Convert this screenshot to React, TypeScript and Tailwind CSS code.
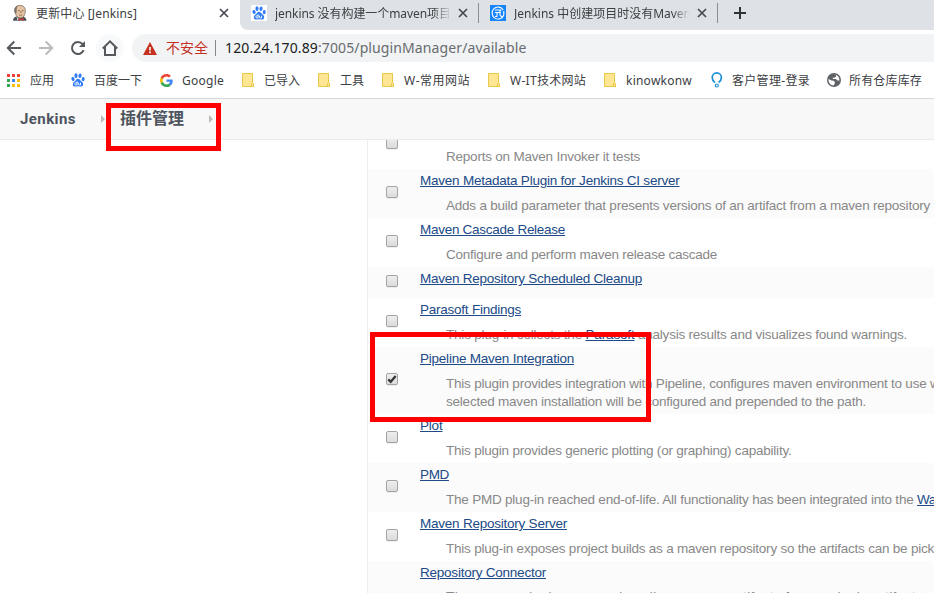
import { useLayoutEffect, useRef, useState } from 'react';
import type { ReactNode } from 'react';

/* Text set to an exact width by spreading the difference over its letters. */
function Fit({ w, children, className = '' }: { w: number; children: string; className?: string }) {
  const ref = useRef<HTMLSpanElement>(null);
  const [ls, setLs] = useState(0);
  useLayoutEffect(() => {
    if (ref.current) setLs((w - ref.current.getBoundingClientRect().width) / children.length);
  }, [w, children]);
  return (
    <span ref={ref} className={`whitespace-pre ${className}`} style={{ letterSpacing: ls }}>
      {children}
    </span>
  );
}

function Paw({ className }: { className: string }) {
  return (
    <svg viewBox="0 0 16 16" className={className} fill="#2f7cf6">
      <ellipse cx="5.7" cy="3" rx="1.8" ry="2.6" />
      <ellipse cx="10.3" cy="3.1" rx="1.8" ry="2.6" transform="rotate(10 10.3 3.1)" />
      <ellipse cx="2.3" cy="6.8" rx="1.8" ry="2.3" transform="rotate(-15 2.3 6.8)" />
      <ellipse cx="13.9" cy="7" rx="1.7" ry="2.4" transform="rotate(10 13.9 7)" />
      <path d="M8 6.5c2 0 2.4 1.8 3.9 3 1.8 1.4 2.4 2.8 1.8 4.4-.7 2-2.7 1.6-4.2 1.4-1-.2-2-.2-3 0-1.500.3-3.600.5-4.200-1.400-.600-1.700.3-3 1.800-4.200C5.600 8.500 6 6.500 8 6.500z" />
      <path d="M7 9.400v4.200H5.500c-1.600 0-1.600-2.400 0-2.400H7M8.600 11v2c0 .6.400.7 1 .7h1.300V11" fill="none" stroke="#fff" strokeWidth="1" />
    </svg>
  );
}

function Butler() {
  return (
    <svg viewBox="0 0 16 16" className="h-4 w-4">
      <path d="M1 15.800c0-3 2-4 4-4.500l6 .2c2 .6 3.500 1.800 3.500 4.300z" fill="#4a5358" />
      <path d="M2.800 6C2.300 2.300 5 .3 8 .3s5.600 2 5.300 5.700c-.2 3.500-1.500 7-4.900 7S3.200 9.500 2.800 6z" fill="#e3c3a2" stroke="#6b625a" strokeWidth=".7" />
      <path d="M3 8C1.500 3.500 3.500 1 6 .5 4.600 2 4.800 4 4.500 8.500z" fill="#77706a" />
      <path d="M6 5.600h1.800M9.800 5.600h1.800M7 9.800c1 .6 2.400.6 3.300 0M8.900 6v2" stroke="#7c5c4c" strokeWidth=".8" fill="none" />
      <path d="M6.500 13l2.300 1 2.700-1v2.800l-2.700-1-2.300 1z" fill="#d33833" />
      <path d="M4.500 11.500l2 2.300-.8 2z" fill="#eee" />
    </svg>
  );
}

function Close() {
  return (
    <svg viewBox="0 0 10 10" className="h-[10px] w-[10px] shrink-0" stroke="#45494d" strokeWidth="1.700">
      <path d="M1 1l8 8M9 1L1 9" />
    </svg>
  );
}

function FolderIcon() {
  return (
    <svg viewBox="0 0 12 14" className="h-[14px] w-3">
      <path d="M.5.5h10v9.500l1 .5v3H.5z" fill="#ffe694" stroke="#e9c747" />
      <path d="M9.500 13.500v-3l1-1 1 1v3z" fill="#ffe694" stroke="#e9c747" />
    </svg>
  );
}

function AppsIcon() {
  const colors = ['#ea4335', '#ea4335', '#ea4335', '#34a853', '#4285f4', '#fbbc05', '#34a853', '#fbbc05', '#fbbc05'];
  return (
    <svg viewBox="0 0 13 13" className="h-[13px] w-[13px]" shapeRendering="crispEdges">
      {colors.map((c, i) => (
        <rect key={i} x={(i % 3) * 5} y={Math.floor(i / 3) * 5} width="3" height="3" fill={c} />
      ))}
    </svg>
  );
}

function GoogleIcon() {
  return (
    <svg viewBox="0 0 48 48" className="h-[13px] w-[13px]">
      <path fill="#EA4335" d="M24 9.500c3.540 0 6.710 1.220 9.210 3.600l6.850-6.850C35.900 2.380 30.470 0 24 0 14.620 0 6.510 5.380 2.560 13.220l7.980 6.190C12.430 13.720 17.740 9.500 24 9.500z" />
      <path fill="#4285F4" d="M46.980 24.550c0-1.570-.15-3.090-.38-4.550H24v9.020h12.940c-.58 2.960-2.260 5.480-4.780 7.180l7.730 6c4.510-4.180 7.090-10.360 7.090-17.650z" />
      <path fill="#FBBC05" d="M10.530 28.590c-.48-1.450-.76-2.990-.76-4.590s.27-3.140.76-4.590l-7.980-6.190C.92 16.460 0 20.120 0 24c0 3.880.92 7.540 2.560 10.780l7.970-6.190z" />
      <path fill="#34A853" d="M24 48c6.480 0 11.930-2.130 15.890-5.810l-7.730-6c-2.150 1.450-4.920 2.300-8.160 2.300-6.260 0-11.570-4.220-13.470-9.910l-7.980 6.190C6.510 42.620 14.620 48 24 48z" />
    </svg>
  );
}

function BulbIcon() {
  return (
    <svg viewBox="0 0 12 16" className="h-4 w-3" fill="none" stroke="#1c8fd6">
      <path d="M4 10.500C2.200 9.200 1.200 7.600 1.200 5.500a4.600 4.600 0 0 1 9.200 0c0 2.100-1 3.700-2.800 5" strokeWidth="1.700" />
      <circle cx="5.800" cy="13.500" r="1.500" strokeWidth="1.200" />
    </svg>
  );
}

function GlobeIcon() {
  return (
    <svg viewBox="0 0 14 14" className="h-[14px] w-[14px]">
      <circle cx="7" cy="7" r="7" fill="#5f6368" />
      <path d="M1.500 6l3 1.500 2 .3L7.800 9v1.500L6.500 12.500C3.800 12.300 1.500 10 1.500 7zM6.500 1.500L9 1.800v1.700L7.500 4.800H5.800V6h3l1.700 1.500h1.900C12.700 4 10 1.300 6.500 1.500z" fill="#fff" />
    </svg>
  );
}

const bookmarks: { icon: ReactNode; label: string; box: string; w: number; gap: string }[] = [
  { icon: <AppsIcon />, label: '应用', box: 'w-[64px]', w: 24, gap: 'w-[23px]' },
  { icon: <Paw className="h-[14px] w-[14px]" />, label: '百度一下', box: 'w-[89px]', w: 48, gap: 'w-[23px]' },
  { icon: <GoogleIcon />, label: 'Google', box: 'w-[82px]', w: 42, gap: 'w-[22px]' },
  { icon: <FolderIcon />, label: '已导入', box: 'w-[76px]', w: 36, gap: 'w-[22px]' },
  { icon: <FolderIcon />, label: '工具', box: 'w-[64px]', w: 24, gap: 'w-[22px]' },
  { icon: <FolderIcon />, label: 'W-常用网站', box: 'w-[106px]', w: 66, gap: 'w-[22px]' },
  { icon: <FolderIcon />, label: 'W-IT技术网站', box: 'w-[116px]', w: 76, gap: 'w-[22px]' },
  { icon: <FolderIcon />, label: 'kinowkonw', box: 'w-[107px]', w: 66, gap: 'w-[22px]' },
  { icon: <BulbIcon />, label: '客户管理-登录', box: 'w-[116px]', w: 78, gap: 'w-[21px]' },
  { icon: <GlobeIcon />, label: '所有仓库库存', box: 'w-[107px]', w: 73, gap: 'w-[22px]' },
];

function Check({ checked = false }: { checked?: boolean }) {
  return (
    <span className="flex h-3 w-3 items-center justify-center rounded-[2px] border border-[#a3a3a3] bg-linear-to-b from-[#eeeeee] to-[#dcdcdc] shadow-[0_1px_0_rgba(0,0,0,0.06)]">
      {checked && (
        <svg viewBox="0 0 10 10" className="h-[10px] w-[10px] shrink-0" fill="none" stroke="#333" strokeWidth="2.200">
          <path d="M1.300 5.400l2.400 2.400L8.700 2" />
        </svg>
      )}
    </span>
  );
}

type Part = { text: string; w: number; link?: boolean };
type Plugin = { name: string; w: number; h: string; pad: string; lines: Part[][]; checked?: boolean; noBox?: boolean };

const plugins: Plugin[] = [
  { name: 'Maven Metadata Plugin for Jenkins CI server', w: 259.500, h: 'h-[49px]', pad: 'pt-[17px]', lines: [[{ text: 'Adds a build parameter that presents versions of an artifact from a maven repository', w: 484 }]] },
  { name: 'Maven Cascade Release', w: 145, h: 'h-[49px]', pad: 'pt-[17px]', lines: [[{ text: 'Configure and perform maven release cascade', w: 271 }]] },
  { name: 'Maven Repository Scheduled Cleanup', w: 222, h: 'h-[31px]', pad: 'pt-[8px]', lines: [] },
  { name: 'Parasoft Findings', w: 101, h: 'h-[49px]', pad: 'pt-[17px]', lines: [[{ text: 'This plug-in collects the ', w: 139.500 }, { text: 'Parasoft', w: 49, link: true }, { text: ' analysis results and visualizes found warnings.', w: 272.500 }]] },
  {
    name: 'Pipeline Maven Integration', w: 154, h: 'h-[67px]', pad: 'pt-[26px]', checked: true,
    lines: [
      [{ text: 'This plugin provides integration with Pipeline, configures maven environment to use ', w: 484 }, { text: 'w', w: 9 }],
      [{ text: 'selected maven installation will be configured and prepended to the path.', w: 420 }],
    ],
  },
  { name: 'Plot', w: 22.500, h: 'h-[49px]', pad: 'pt-[17px]', lines: [[{ text: 'This plugin provides generic plotting (or graphing) capability.', w: 345.500 }]] },
  { name: 'PMD', w: 29, h: 'h-[49px]', pad: 'pt-[17px]', lines: [[{ text: 'The PMD plug-in reached end-of-life. All functionality has been integrated into the ', w: 471 }, { text: 'Wa', w: 19, link: true }]] },
  { name: 'Maven Repository Server', w: 147, h: 'h-[49px]', pad: 'pt-[17px]', lines: [[{ text: 'This plug-in exposes project builds as a maven repository so the artifacts can be pick', w: 488 }]] },
  { name: 'Repository Connector', w: 126, h: 'h-[49px]', pad: 'pt-[17px]', noBox: true, lines: [[{ text: 'The maven plugin can resolve all necessary artifacts from a single artifact', w: 470 }]] },
];

function Row({ p, shaded, last }: { p: Plugin; shaded: boolean; last: boolean }) {
  return (
    <div className={`flex ${p.h} shrink-0 ${shaded ? 'bg-[#fbfbfb]' : 'bg-white'}`}>
      <div className={`w-[52px] shrink-0 pl-[18px] ${p.pad}`}>{!p.noBox && <Check checked={p.checked} />}</div>
      <div className="pt-[3px]">
        <div className="h-[18px] leading-[18px] text-[#204a87]">
          <Fit w={p.w} className="underline">{p.name}</Fit>
        </div>
        <div className={`pl-[26px] ${last ? 'pt-[6px]' : 'pt-[7px]'}`}>
          {p.lines.map((line, i) => (
            <div key={i} className="flex h-[18px] leading-[18px] text-[#888888]">
              {line.map((part) => (
                <Fit key={part.text} w={part.w} className={part.link ? 'text-[#204a87] underline' : ''}>{part.text}</Fit>
              ))}
            </div>
          ))}
        </div>
      </div>
    </div>
  );
}

function Arrow() {
  return <span className="h-0 w-0 border-y-4 border-l-4 border-y-transparent border-l-[#babdb6]" />;
}

export default function App() {
  return (
    <div className="relative flex h-[593px] w-[934px] flex-col overflow-hidden bg-white font-['Noto_Sans','Noto_Sans_CJK_SC',sans-serif] text-xs text-[#3c4043]">
      {/* tab strip */}
      <div className="flex h-[30px] shrink-0 bg-white">
        <div className="flex w-60 items-center bg-white pb-1 pl-3">
          <Butler />
          <div className="ml-2 w-[183px] pt-[2px]"><Fit w={101}>更新中心 [Jenkins]</Fit></div>
          <Close />
        </div>
        <div className="flex flex-1 items-center rounded-bl-lg bg-[#dee1e6] pb-1 pl-[11px]">
          <div className="flex h-4 w-4 items-center justify-center bg-white"><Paw className="h-[14px] w-[14px]" /></div>
          <div className="ml-2 w-[176px] overflow-hidden pt-[2px] mask-r-from-90%"><Fit w={176}>jenkins 没有构建一个maven项目</Fit></div>
          <div className="ml-[7px] flex"><Close /></div>
          <div className="ml-[10px] h-5 w-px bg-[#8b8e92]" />
          <svg viewBox="0 0 16 16" className="ml-[11px] h-4 w-4">
            <rect width="16" height="16" fill="#1684fc" />
            <g fill="none" stroke="#fff" strokeWidth="1.100">
              <path d="M13.300 5A6 6 0 1 0 13.800 10M5 5h6.500M4.800 7.500h6M7 7.500v4H5M10 5v4.500c0 1.200.8 2 2.300 1.800M13.800 10V6" />
            </g>
          </svg>
          <div className="ml-2 w-[176px] overflow-hidden pt-[2px] mask-r-from-90%"><Fit w={177}>Jenkins 中创建项目时没有Maven</Fit></div>
          <div className="ml-[7px] flex"><Close /></div>
          <div className="ml-[10px] h-5 w-px bg-[#8b8e92]" />
          <svg viewBox="0 0 12 12" className="ml-4 h-3 w-3" stroke="#303336" strokeWidth="2"><path d="M6 0v12M0 6h12" /></svg>
        </div>
      </div>

      {/* navigation and address */}
      <div className="flex h-8 shrink-0 items-end pl-[6px]">
        <div className="flex h-7 w-[126px] items-center text-[#5f6368]">
          <svg viewBox="0 0 16 16" className="h-4 w-4" fill="none" stroke="#55595d" strokeWidth="2"><path d="M15 8H2M8.300 1.500L1.800 8l6.500 6.500" /></svg>
          <svg viewBox="0 0 16 16" className="ml-4 h-4 w-4" fill="none" stroke="#babcbe" strokeWidth="2"><path d="M1 8h13M7.700 1.500L14.200 8l-6.500 6.500" /></svg>
          <svg viewBox="0 0 16 16" className="ml-4 h-4 w-4" fill="none" stroke="#55595d" strokeWidth="2"><path d="M13.600 10.200A6 6 0 1 1 12.600 4.200" /><path d="M15 1v6H9z" fill="#55595d" stroke="none" /></svg>
          <div className="ml-[10px] flex h-7 w-7 items-center justify-center rounded-full bg-[#f8f9fa]">
            <svg viewBox="0 0 16 16" className="h-4 w-4" fill="none" stroke="#55595d" strokeWidth="2"><path d="M.8 8.500L8 1.400l7.200 7.100M3 7v8h10V7" /></svg>
          </div>
        </div>
        <div className="flex h-7 flex-1 items-center rounded-l-full bg-[#f1f3f4] pl-[11px] text-sm">
          <svg viewBox="0 0 14 13" className="h-[13px] w-[14px]"><path d="M7 0l7 13H0z" fill="#c5301f" /><path d="M6.200 5h1.600v3.500H6.200zM6.200 9.600h1.600v1.600H6.200z" fill="#fff" /></svg>
          <div className="ml-[9px] w-[49px] text-[#c5301f]"><Fit w={42}>不安全</Fit></div>
          <div className="h-4 w-px bg-[#85888c]" />
          <div className="ml-[9px] flex">
            <Fit w={93} className="text-[#202124]">120.24.170.89</Fit>
            <Fit w={208.500} className="text-[#686c70]">:7005/pluginManager/available</Fit>
          </div>
        </div>
      </div>

      {/* bookmarks */}
      <div className="flex h-[37px] shrink-0 items-center border-b border-[#d5d7d9] pl-[7px]">
        {bookmarks.map((b) => (
          <div key={b.label} className={`flex shrink-0 items-center ${b.box}`}>
            <div className={`flex shrink-0 items-center ${b.gap}`}>{b.icon}</div>
            <div className="pt-[2px]"><Fit w={b.w}>{b.label}</Fit></div>
          </div>
        ))}
      </div>

      {/* breadcrumbs */}
      <div className="flex h-[41px] shrink-0 items-center border-b border-[#e8edec] bg-[#f8f8f8] pl-5 font-[Roboto,'Noto_Sans_CJK_SC',sans-serif] text-base font-bold text-[#4d545d]">
        <div className="w-[81px]"><Fit w={56} className="text-[15px]">Jenkins</Fit></div>
        <Arrow />
        <div className="ml-[15px] w-[89px]"><Fit w={64}>插件管理</Fit></div>
        <Arrow />
      </div>

      {/* side panel and plugin table */}
      <div className="flex min-h-0 flex-1 overflow-hidden font-['Liberation_Sans',sans-serif] text-[13.5px]">
        <div className="w-[367px] shrink-0" />
        <div className="flex flex-1 flex-col overflow-hidden border-l border-[#ececec] pl-px">
          <div className="flex h-[29px] shrink-0 text-[#888888]">
            <div className="w-[77px] pl-[17px]"><div className="-mt-[3px]"><Check /></div></div>
            <div className="pt-[8px] leading-[18px]"><Fit w={194}>Reports on Maven Invoker it tests</Fit></div>
          </div>
          <div className="-ml-px flex flex-col">
            {plugins.map((p, i) => <Row key={p.name} p={p} shaded={i % 2 === 0} last={i === plugins.length - 1} />)}
          </div>
        </div>
      </div>

      {/* highlight frames */}
      <div className="absolute left-[106px] top-[103px] h-12 w-[115px] border-5 border-[#fe0000]" />
      <div className="absolute left-[370px] top-[332px] h-[90px] w-[281px] border-5 border-[#fe0000]" />
    </div>
  );
}
